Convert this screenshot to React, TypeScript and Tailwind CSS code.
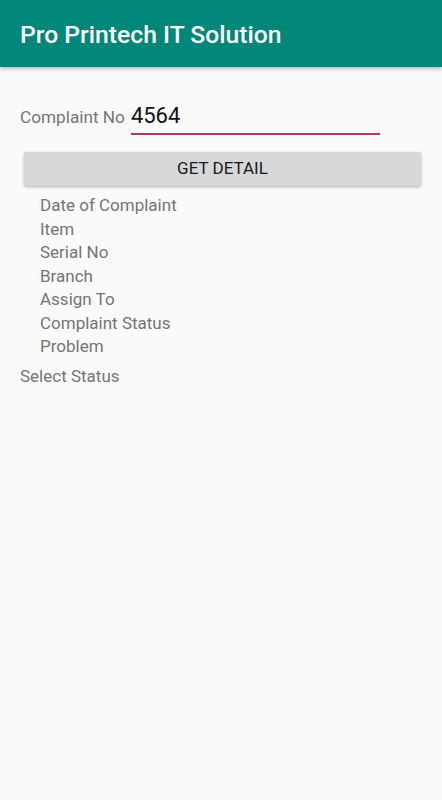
export default function App() {
  const fields = [
    'Date of Complaint',
    'Item',
    'Serial No',
    'Branch',
    'Assign To',
    'Complaint Status',
    'Problem',
  ]

  return (
    <div className="min-h-[800px] bg-[#fafafa] font-['Roboto',sans-serif]">
      {/* App bar */}
      <header className="h-[67px] bg-[#00877a] flex items-center px-5 pt-[3px] shadow-[0_2px_4px_rgba(0,0,0,0.25)]">
        <h1 className="text-[24.7px] font-medium text-white leading-none">Pro Printech IT Solution</h1>
      </header>

      <div className="pt-[36px]">
        <div className="flex items-end pl-5">
          <span className="text-[17.2px] text-[#757575] pb-[9px] leading-none">Complaint No</span>
          <div className="ml-[6px] w-[249px] border-b-2 border-[#b5336f] pb-[3px] pt-[2px]">
            <span className="text-[22px] text-[#111] leading-none">4564</span>
          </div>
        </div>

        <button className="mt-[17px] ml-6 w-[397px] h-[34px] bg-[#d6d7d7] shadow-[0_1px_3px_rgba(0,0,0,0.3)] text-[17px] font-normal text-[#1a1a1a] uppercase rounded-[2px]">
          Get Detail
        </button>

        <ul className="mt-[8px] pl-10">
          {fields.map((f) => (
            <li key={f} className="text-[17px] leading-[23.5px] text-[#757575]">
              {f}
            </li>
          ))}
        </ul>

        <p className="mt-[6px] pl-5 text-[17px] leading-[23.5px] text-[#757575]">Select Status</p>
      </div>
    </div>
  )
}
